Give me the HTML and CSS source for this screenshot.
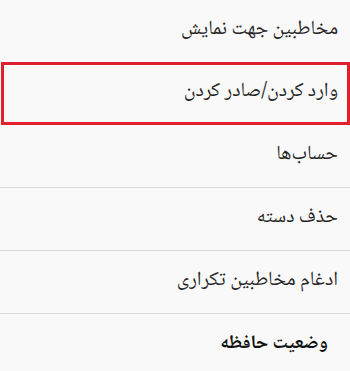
FILE: index.html
```html
<!DOCTYPE html>
<html lang="fa" dir="rtl">
<head>
<meta charset="utf-8">
<link rel="stylesheet" href="styles.css">
</head>
<body>
<ul class="menu">
  <li class="item first">مخاطبین جهت نمایش</li>
  <li class="item selected">وارد کردن/صادر کردن</li>
  <li class="item">حساب‌ها</li>
  <li class="item">حذف دسته</li>
  <li class="item">ادغام مخاطبین تکراری</li>
  <li class="item last">وضعیت حافظه</li>
</ul>
</body>
</html>
```
FILE: styles.css
```css
html, body {
  margin: 0;
  padding: 0;
  background: #f9f9f9;
}
.menu {
  list-style: none;
  margin: 0;
  padding: 0;
  width: 350px;
  font-family: "Noto Naskh Arabic", "Noto Sans Arabic", "DejaVu Sans", sans-serif;
  font-size: 20px;
  color: #262626;
}
.item {
  box-sizing: border-box;
  height: 63px;
  display: flex;
  align-items: center;
  padding-right: 12px;
  padding-bottom: 3px;
  border-bottom: 1px solid #dcdcdc;
}
.item.first {
  height: 62px;
  border-bottom: none;
}
.item.selected {
  border: 3px solid #e0212d;
  height: 63px;
  padding-right: 9px;
  width: 349px;
}
.item.last {
  border-bottom: none;
  height: 56px;
  padding-bottom: 0;
  padding-top: 4px;
  padding-right: 22px;
  font-size: 19px;
  font-weight: bold;
  color: #111;
}
```
